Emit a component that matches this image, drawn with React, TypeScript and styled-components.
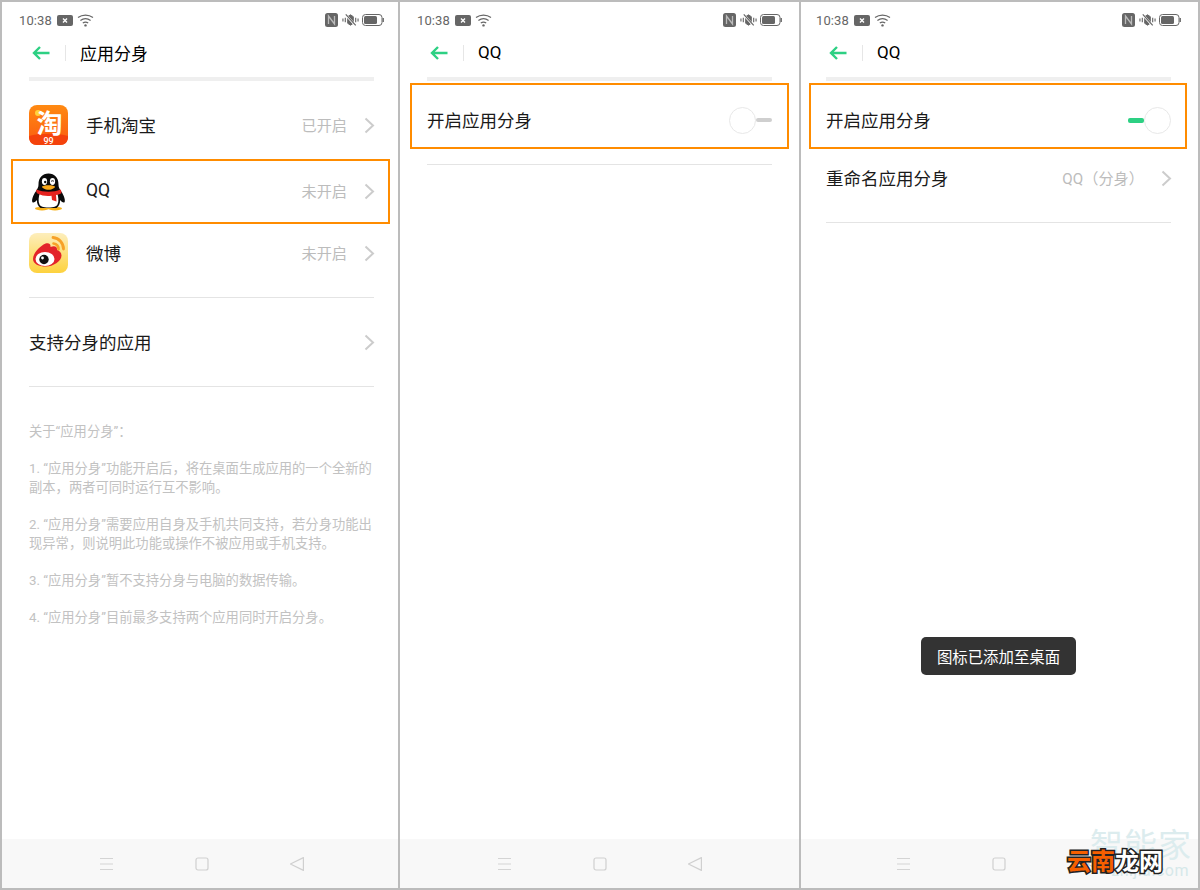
import React from "react";
import styled, { createGlobalStyle } from "styled-components";

const GREEN = "#2dd083";
const ORANGE = "#ff8c00";

const GlobalStyle = createGlobalStyle`
  html, body {
    margin: 0;
    padding: 0;
    background: #bcbcbc;
  }
  body {
    font-family: Roboto, "Noto Sans CJK SC", sans-serif;
  }
`;

const Page = styled.div`
  display: grid;
  grid-template-columns: 396px 399px 397px;
  gap: 2px;
  box-sizing: border-box;
  width: 1200px;
  height: 890px;
  padding: 2px;
  background: #bcbcbc;
  overflow: hidden;
`;

const Panel = styled.section`
  position: relative;
  display: flex;
  flex-direction: column;
  background: #fff;
  height: 886px;
`;

const Content = styled.div<{ $left: number }>`
  width: 345px;
  margin-left: ${({ $left }) => $left}px;
`;

const StatusBar = styled.div`
  display: flex;
  align-items: center;
  height: 36px;
  margin: 0 -10px;
  color: #666;
`;

const Clock = styled.span`
  font-size: 13px;
  margin-right: 5px;
  letter-spacing: 0.1px;
`;

const StatusLeft = styled.div`
  display: flex;
  align-items: center;
  gap: 4px;
`;

const StatusRight = styled.div`
  display: flex;
  align-items: center;
  gap: 3px;
  margin-left: auto;
`;

const NfcIcon = styled.svg`
  margin-right: 1px;
`;

const Header = styled.header`
  display: flex;
  align-items: center;
  height: 30px;
`;

const BackIcon = styled.svg`
  width: 18px;
  height: 14px;
  margin-left: 3px;
`;

const HeaderSep = styled.div`
  width: 1px;
  height: 16px;
  margin: 0 14px 0 15px;
  background: #e6e6e6;
`;

const Title = styled.h1`
  margin: 0;
  padding-bottom: 2px;
  font-size: 17px;
  font-weight: 400;
  color: #000;
`;

const ThickDivider = styled.div`
  height: 4px;
  margin-top: 9px;
  background: #efefef;
`;

const Divider = styled.div<{ $top: number }>`
  height: 1px;
  margin-top: ${({ $top }) => $top}px;
  background: #e4e4e4;
`;

const AppList = styled.div`
  margin-top: 11px;
`;

const Row = styled.div<{ $height: number }>`
  position: relative;
  display: flex;
  align-items: center;
  height: ${({ $height }) => $height}px;
`;

const Highlight = styled.div<{ $top: number; $bottom: number; $left: number; $right: number }>`
  position: absolute;
  top: ${({ $top }) => $top}px;
  bottom: ${({ $bottom }) => $bottom}px;
  left: ${({ $left }) => $left}px;
  right: ${({ $right }) => $right}px;
  border: 2px solid ${ORANGE};
  pointer-events: none;
`;

const AppIconSlot = styled.div`
  width: 39px;
  height: 40px;
  margin-right: 18px;
  flex: none;
`;

const Label = styled.span`
  padding-bottom: 2px;
  font-size: 17.5px;
  color: #1a1a1a;
`;

const Hint = styled.span`
  margin-left: auto;
  padding-bottom: 2px;
  font-size: 15.2px;
  color: #bcbcbc;
`;

const ChevronIcon = styled.svg<{ $auto?: boolean }>`
  width: 11px;
  height: 17px;
  flex: none;
  margin-left: ${({ $auto }) => ($auto ? "auto" : "17px")};
  margin-right: -1px;
`;

const Notes = styled.div`
  margin-top: 35px;
  width: 346px;
`;

const Note = styled.p`
  margin: 0 0 18px;
  font-size: 13.3px;
  line-height: 19px;
  color: #c2c2c2;
`;

const ToggleWrap = styled.div`
  display: flex;
  align-items: center;
  margin-left: auto;
  width: 43px;
`;

const ToggleBar = styled.div<{ $on: boolean }>`
  flex: 1;
  height: ${({ $on }) => ($on ? 5 : 4)}px;
  border-radius: 2px;
  background: ${({ $on }) => ($on ? GREEN : "#cfcfcf")};
`;

const ToggleKnob = styled.div`
  box-sizing: border-box;
  flex: none;
  width: 27px;
  height: 27px;
  border-radius: 50%;
  background: #fff;
  border: 1px solid #e8e8e8;
`;

const NavBar = styled.nav<{ $left: number }>`
  display: flex;
  align-items: center;
  gap: 81px;
  height: 49px;
  margin-top: auto;
  padding-left: ${({ $left }) => $left}px;
  background: #f8f8f8;
`;

const NavIcon = styled.svg`
  width: 14px;
  height: 14px;
`;

const Toast = styled.div`
  position: absolute;
  left: 120px;
  top: 635px;
  display: flex;
  align-items: center;
  justify-content: center;
  width: 155px;
  height: 38px;
  border-radius: 5px;
  background: #333;
  color: #fff;
  font-size: 15.4px;
`;

const WatermarkLogo = styled.div`
  position: absolute;
  right: 6px;
  bottom: 24px;
  font-size: 33px;
  line-height: 36px;
  letter-spacing: 1px;
  color: #dcecee;
`;

const WatermarkUrl = styled.div`
  position: absolute;
  right: 9px;
  bottom: 8px;
  font-size: 16px;
  line-height: 18px;
  letter-spacing: 0.5px;
  color: #d6e8ea;
`;

const SiteMark = styled.div`
  position: absolute;
  left: 266px;
  bottom: 12px;
  font-size: 24px;
  line-height: 28px;
  font-weight: 700;
  color: #fff;
  -webkit-text-stroke: 3px #222;
  paint-order: stroke fill;
`;

const SiteMarkHot = styled.span`
  color: #f55f00;
`;

const Chevron = ({ auto }: { auto?: boolean }) => (
  <ChevronIcon $auto={auto} viewBox="0 0 11 17" fill="none">
    <path d="M1.5 1.5 9 8.5 1.5 15.5" stroke="#cccccc" strokeWidth="2" />
  </ChevronIcon>
);

const Status = () => (
  <StatusBar>
    <Clock>10:38</Clock>
    <StatusLeft>
      <svg width="16" height="11" viewBox="0 0 16 11">
        <rect width="16" height="11" rx="2" fill="#666" />
        <path d="M6 3.5 10 7.5M10 3.5 6 7.5" stroke="#fff" strokeWidth="1.4" />
      </svg>
      <svg width="17" height="13" viewBox="0 0 17 13" fill="none" stroke="#666">
        <path d="M1 3.6C5.4.4 11.6.4 16 3.6" strokeWidth="1.2" />
        <path d="M3.4 6.4c3-2.1 7.2-2.1 10.2 0" strokeWidth="1.2" />
        <path d="M5.8 9c1.6-1 3.8-1 5.4 0" strokeWidth="1.2" />
        <circle cx="8.5" cy="11.4" r="1.2" fill="#666" stroke="none" />
      </svg>
    </StatusLeft>
    <StatusRight>
      <NfcIcon width="13" height="14" viewBox="0 0 13 14">
        <rect width="13" height="14" rx="2.5" fill="#666" />
        <path d="M3.5 11V3L9.5 11V3" stroke="#bbb" strokeWidth="1.3" fill="none" />
      </NfcIcon>
      <svg width="17" height="14" viewBox="0 0 18 14" fill="none" stroke="#666">
        <path d="M6 3.5 9 1.5l3 2v7l-3 2-3-2z" fill="#666" />
        <path d="M3.5 4.5v5M1 5.5v3M14.5 4.5v5M17 5.5v3" strokeWidth="1.2" />
        <path d="M3.5 1 14.5 13" stroke="#fff" strokeWidth="2.4" />
        <path d="M4 1 14.5 12.6" strokeWidth="1.3" />
      </svg>
      <svg width="22" height="12" viewBox="0 0 22 12" fill="none">
        <rect x=".5" y=".5" width="19.5" height="11" rx="3" stroke="#666" />
        <rect x="2" y="2" width="13" height="8" rx="1.5" fill="#666" />
        <path d="M21.2 4v4" stroke="#666" strokeWidth="1.4" />
      </svg>
    </StatusRight>
  </StatusBar>
);

const PageHeader = ({ title }: { title: string }) => (
  <>
    <Status />
    <Header>
      <BackIcon viewBox="0 0 18 14" fill="none" stroke={GREEN} strokeWidth="2.4">
        <path d="M17.500 7H2.500M8 1 2 7l6 6" />
      </BackIcon>
      <HeaderSep />
      <Title>{title}</Title>
    </Header>
    <ThickDivider />
  </>
);

const Nav = ({ left }: { left: number }) => (
  <NavBar $left={left}>
    <NavIcon viewBox="0 0 14 14" fill="none" stroke="#d4d4d4" strokeWidth="1">
      <path d="M0 1.500h13M0 7h13M0 12.500h13" />
    </NavIcon>
    <NavIcon viewBox="0 0 14 14" fill="none" stroke="#d0d0d0" strokeWidth="1.200">
      <rect x="1" y="1" width="12" height="12" rx="2" />
    </NavIcon>
    <NavIcon viewBox="0 0 14 14" fill="none" stroke="#d0d0d0" strokeWidth="1.200" strokeLinejoin="round">
      <path d="M13.400.6v12.800L.4 7z" />
    </NavIcon>
  </NavBar>
);

const TaobaoIcon = () => (
  <svg width="39" height="40" viewBox="0 0 39 40">
    <defs>
      <linearGradient id="tb" x1="0" y1="0" x2="0" y2="1">
        <stop offset="0" stopColor="#ff8a12" />
        <stop offset="1" stopColor="#fb5a10" />
      </linearGradient>
    </defs>
    <rect width="39" height="40" rx="8" fill="url(#tb)" />
    <path d="M0 31c10-3 29-3 39 0v1c0 5-3 8-8 8H8c-5 0-8-3-8-8z" fill="#f4420c" />
    <circle cx="9" cy="8" r="3" fill="#ffd23c" />
    <text x="20.500" y="27.500" textAnchor="middle" fontSize="26" fontWeight="700" fill="#fff" fontFamily="'Noto Sans CJK SC', sans-serif">淘</text>
    <text x="19.500" y="38.500" textAnchor="middle" fontSize="9" fontWeight="500" fill="#fff" fontFamily="Roboto, sans-serif">99</text>
  </svg>
);

const QQIcon = () => (
  <svg width="39" height="40" viewBox="0 0 39 40">
    <ellipse cx="13" cy="37.600" rx="7" ry="1.800" fill="#f7b017" />
    <ellipse cx="26" cy="37.600" rx="7" ry="1.800" fill="#f7b017" />
    <path d="M9.500 13.500C9.500 6.500 13.500 2.500 19.500 2.500s10 4 10 11c0 2.500.8 3.800 1.800 5.500 2.400 3.500 5.400 8.600 4.400 12-1 1.200-3 .2-4.700-2 .3 3.500-1 6-3.500 8H11.500C9 35 7.700 32.500 8 29c-1.700 2.200-3.700 3.200-4.700 2-1-3.400 2-8.500 4.400-12 1-1.700 1.800-3 1.800-5.500z" fill="#0b0b0b" />
    <path d="M11 22c5 1.600 12 1.600 17 0 1.500 3.500 2 8.500.5 11.500-1 2-3.500 3-9 3s-8-1-9-3c-1.500-3-1-8 .5-11.500z" fill="#fff" />
    <ellipse cx="15.500" cy="10.500" rx="2.600" ry="3.400" fill="#fff" />
    <ellipse cx="23.500" cy="10.500" rx="2.600" ry="3.400" fill="#fff" />
    <circle cx="16.200" cy="11" r="1.200" fill="#111" />
    <path d="M22 10.500c1-1 2.200-1 3 0" stroke="#111" strokeWidth="1" fill="none" />
    <path d="M13 15.500c3-1.800 10-1.800 13 0 .5 1.200-3 3.300-6.500 3.300S12.500 16.700 13 15.500z" fill="#f9a91a" />
    <path d="M7.500 18.500c7 3 17 3 24 0 .8 1 1 2.500.8 3.700-2 1-3.600 1.500-5.300 1.900l.5 6.400-4.500-1.500-.5-4.300c-4.500.6-9 .3-14.500-2.500-.8-1.300-1-2.700-.5-3.700z" fill="#e6231f" />
  </svg>
);

const WeiboIcon = () => (
  <svg width="39" height="40" viewBox="0 0 39 40">
    <defs>
      <linearGradient id="wb" x1="0" y1="0" x2="0" y2="1">
        <stop offset="0" stopColor="#fdeebc" />
        <stop offset="1" stopColor="#fdd23e" />
      </linearGradient>
    </defs>
    <rect width="39" height="40" rx="8" fill="url(#wb)" />
    <path d="M24 4.500c6 .5 10.500 5.500 10.500 11.500" stroke="#f7a128" strokeWidth="2.800" fill="none" strokeLinecap="round" />
    <path d="M24.500 10.500c3 .4 5 2.800 5 5.800" stroke="#f7a128" strokeWidth="2.600" fill="none" strokeLinecap="round" />
    <path d="M4 26c0-5 5-11 10.500-14.500 4-2.500 7.500-1.500 7 2.500 4-1.500 7-.5 6.500 3 2.500.5 4.500 2.700 4.500 5.500 0 6-8.500 11-15.500 11S4 31 4 26z" fill="#e3232a" />
    <ellipse cx="16" cy="26" rx="9.500" ry="7" fill="#fff" />
    <circle cx="15" cy="26.500" r="4.700" fill="#111" />
    <circle cx="13.500" cy="25" r="1.400" fill="#fff" />
  </svg>
);

const Toggle = ({ on }: { on: boolean }) => (
  <ToggleWrap>
    {on && <ToggleBar $on />}
    <ToggleKnob />
    {!on && <ToggleBar $on={false} />}
  </ToggleWrap>
);

const apps = [
  { name: "手机淘宝", state: "已开启", icon: <TaobaoIcon />, height: 66, active: false },
  { name: "QQ", state: "未开启", icon: <QQIcon />, height: 66, active: true },
  { name: "微博", state: "未开启", icon: <WeiboIcon />, height: 58, active: false },
];

const notes = [
  "关于“应用分身”：",
  "1. “应用分身”功能开启后，将在桌面生成应用的一个全新的副本，两者可同时运行互不影响。",
  "2. “应用分身”需要应用自身及手机共同支持，若分身功能出现异常，则说明此功能或操作不被应用或手机支持。",
  "3. “应用分身”暂不支持分身与电脑的数据传输。",
  "4. “应用分身”目前最多支持两个应用同时开启分身。",
];

export default function App() {
  return (
    <Page>
      <GlobalStyle />
      <Panel>
        <Content $left={27}>
          <PageHeader title="应用分身" />
          <AppList>
            {apps.map((app) => (
              <Row key={app.name} $height={app.height}>
                <AppIconSlot>{app.icon}</AppIconSlot>
                <Label>{app.name}</Label>
                <Hint>{app.state}</Hint>
                <Chevron />
                {app.active && <Highlight $top={1} $bottom={0} $left={-18} $right={-16} />}
              </Row>
            ))}
          </AppList>
          <Divider $top={15} />
          <Row $height={88}>
            <Label>支持分身的应用</Label>
            <Chevron auto />
          </Row>
          <Divider $top={0} />
          <Notes>
            {notes.map((note) => (
              <Note key={note}>{note}</Note>
            ))}
          </Notes>
        </Content>
        <Nav left={98} />
      </Panel>

      <Panel>
        <Content $left={27}>
          <PageHeader title="QQ" />
          <Row $height={78}>
            <Label>开启应用分身</Label>
            <Toggle on={false} />
            <Highlight $top={2} $bottom={10} $left={-17} $right={-17} />
          </Row>
          <Divider $top={5} />
        </Content>
        <Nav left={98} />
      </Panel>

      <Panel>
        <Content $left={25}>
          <PageHeader title="QQ" />
          <Row $height={78}>
            <Label>开启应用分身</Label>
            <Toggle on />
            <Highlight $top={2} $bottom={10} $left={-17} $right={-16} />
          </Row>
          <Row $height={38}>
            <Label>重命名应用分身</Label>
            <Hint>QQ（分身）</Hint>
            <Chevron />
          </Row>
          <Divider $top={25} />
        </Content>
        <Nav left={96} />
        <Toast>图标已添加至桌面</Toast>
        <WatermarkLogo>智能家</WatermarkLogo>
        <WatermarkUrl>zhijia.com</WatermarkUrl>
        <SiteMark>
          <SiteMarkHot>云南</SiteMarkHot>龙网
        </SiteMark>
      </Panel>
    </Page>
  );
}
